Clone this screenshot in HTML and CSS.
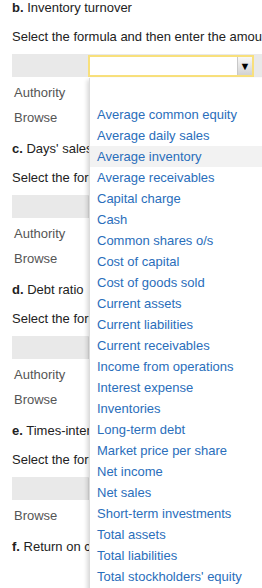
FILE: index.html
```
<!DOCTYPE html>
<html>

<head>
    <link rel="stylesheet" href="styles.css">
</head>

<body>

    <div class="part">
        <div class="title"><b>b.</b> Inventory turnover</div>
        <div class="prompt">Select the formula and then enter the amounts to calculate the ratio.</div>
        <div class="formula-bar">
            <div class="picker active">
                <span class="arrow">&#9660;</span>
                <ul class="options">
                    <li>&nbsp;</li>
                    <li>Average common equity</li>
                    <li>Average daily sales</li>
                    <li class="hover">Average inventory</li>
                    <li>Average receivables</li>
                    <li>Capital charge</li>
                    <li>Cash</li>
                    <li>Common shares o/s</li>
                    <li>Cost of capital</li>
                    <li>Cost of goods sold</li>
                    <li>Current assets</li>
                    <li>Current liabilities</li>
                    <li>Current receivables</li>
                    <li>Income from operations</li>
                    <li>Interest expense</li>
                    <li>Inventories</li>
                    <li>Long-term debt</li>
                    <li>Market price per share</li>
                    <li>Net income</li>
                    <li>Net sales</li>
                    <li>Short-term investments</li>
                    <li>Total assets</li>
                    <li>Total liabilities</li>
                    <li>Total stockholders' equity</li>
                </ul>
            </div>
        </div>
        <div class="links">
            <div>Authority</div>
            <div>Browse</div>
        </div>
    </div>

    <div class="part">
        <div class="title"><b>c.</b> Days' sales in inventory</div>
        <div class="prompt">Select the formula and then enter the amounts to calculate the ratio.</div>
        <div class="formula-bar">
            <div class="picker"><span class="arrow">&#9660;</span></div>
        </div>
        <div class="links">
            <div>Authority</div>
            <div>Browse</div>
        </div>
    </div>

    <div class="part">
        <div class="title"><b>d.</b> Debt ratio</div>
        <div class="prompt">Select the formula and then enter the amounts to calculate the ratio.</div>
        <div class="formula-bar">
            <div class="picker"><span class="arrow">&#9660;</span></div>
        </div>
        <div class="links">
            <div>Authority</div>
            <div>Browse</div>
        </div>
    </div>

    <div class="part">
        <div class="title"><b>e.</b> Times-interest-earned ratio</div>
        <div class="prompt">Select the formula and then enter the amounts to calculate the ratio.</div>
        <div class="formula-bar">
            <div class="picker"><span class="arrow">&#9660;</span></div>
        </div>
        <div class="links">
            <div>Browse</div>
        </div>
    </div>

    <div class="part">
        <div class="title"><b>f.</b> Return on common stockholders' equity</div>
    </div>

</body>

</html>
```

FILE: styles.css
```
html {
    overflow: hidden;
}

body {
    margin: 0;
    padding-left: 12px;
    min-height: 588px;
    font-family: "Liberation Sans", Arial, sans-serif;
    font-size: 13px;
    color: #222;
    white-space: nowrap;
}

.part {
    margin-bottom: 11px;
}

.title {
    line-height: 16px;
}

.prompt {
    line-height: 16px;
    margin-top: 13px;
}

.formula-bar {
    margin-top: 9px;
    height: 23px;
    width: 300px;
    background-color: #e9e9e9;
}

.picker {
    position: relative;
    top: 1px;
    margin-left: 76px;
    width: 162px;
    height: 18px;
    border: 2px solid #ddd;
    background-color: #fff;
    display: flex;
    justify-content: flex-end;
}

.active {
    border-color: #f8e07c;
}

.arrow {
    width: 14px;
    height: 18px;
    font-size: 11px;
    line-height: 18px;
    text-align: center;
    color: #000;
    background: linear-gradient(#f8f8f8, #d2d2d2);
    border-left: 1px solid #c8c8c8;
}

/* opened list of the first picker */
.options {
    position: absolute;
    top: 21px;
    left: -1px;
    width: 210px;
    margin: 0;
    padding: 5px 0 12px 0;
    list-style: none;
    background-color: #fff;
    border-left: 1px solid #dcdcdc;
    box-shadow: -2px 2px 4px rgba(0, 0, 0, 0.15);
    z-index: 2;
}

.options li {
    line-height: 21px;
    padding-left: 7px;
    color: #2a6ebb;
}

.options .hover {
    background-color: #f2f2f2;
}

.links {
    margin-top: 3px;
    padding-left: 2px;
    line-height: 25px;
    color: #555;
}
```
